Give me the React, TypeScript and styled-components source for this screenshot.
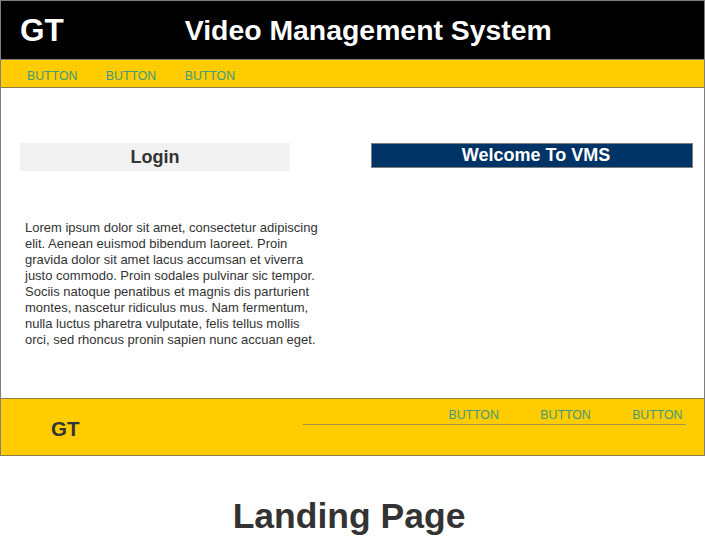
import React from "react";
import styled, { createGlobalStyle } from "styled-components";

const GlobalStyle = createGlobalStyle`
  html, body {
    margin: 0;
    padding: 0;
    background: #ffffff;
    font-family: "Liberation Sans", Arial, Helvetica, sans-serif;
  }
`;

const Page = styled.div`
  width: 705px;
`;

const Frame = styled.div`
  box-sizing: border-box;
  width: 705px;
  border: 1px solid #7f7f7f;
  border-bottom-color: #8a7f4a;
`;

const Header = styled.header`
  height: 58px;
  background: #000000;
  display: flex;
  align-items: center;
  padding-left: 19px;
`;

const Logo = styled.div`
  color: #ffffff;
  font-weight: bold;
  font-size: 31.5px;
`;

const Title = styled.h1`
  margin: 0 0 0 121px;
  color: #ffffff;
  font-weight: bold;
  font-size: 28.4px;
`;

const NavBar = styled.nav`
  box-sizing: border-box;
  height: 29px;
  background: #ffcc00;
  border-top: 1px solid #7f7f7f;
  border-bottom: 1px solid #8a7f4a;
  display: flex;
  align-items: flex-start;
  gap: 28.5px;
  padding: 9px 0 0 26px;
`;

const NavButton = styled.span`
  font-size: 12.3px;
  line-height: 14px;
  color: #3f9a7f;
`;

const Content = styled.main`
  height: 310px;
  display: flex;
  justify-content: space-between;
  align-items: flex-start;
  padding-top: 55px;
  box-sizing: border-box;
`;

const LeftColumn = styled.section`
  margin-left: 19px;
  display: flex;
  flex-direction: column;
`;

const LoginBox = styled.div`
  width: 270px;
  height: 28px;
  background: #f2f2f2;
  color: #333333;
  font-weight: bold;
  font-size: 18px;
  display: flex;
  align-items: center;
  justify-content: center;
`;

const Lorem = styled.p`
  margin: 49px 0 0 5px;
  width: 302px;
  font-size: 13px;
  line-height: 16px;
  color: #333333;
`;

const WelcomeBox = styled.div`
  box-sizing: border-box;
  width: 322px;
  height: 25px;
  margin-right: 11px;
  background: #003366;
  border: 1px solid #7f7f7f;
  color: #ffffff;
  font-weight: bold;
  font-size: 18px;
  display: flex;
  align-items: center;
  justify-content: center;
  padding-left: 8px;
`;

const Footer = styled.footer`
  height: 56px;
  background: #ffcc00;
  border-top: 1px solid #8a7f4a;
  display: flex;
  align-items: flex-start;
`;

const FooterLogo = styled.div`
  align-self: center;
  margin: 3px 0 0 50px;
  color: #333333;
  font-weight: bold;
  font-size: 20.5px;
`;

const FooterNav = styled.nav`
  box-sizing: border-box;
  margin: 9px 18px 0 auto;
  width: 383px;
  display: flex;
  justify-content: flex-end;
  gap: 41.5px;
  padding: 0 3.5px 2px 0;
  border-bottom: 1px solid #a89448;
`;

const Caption = styled.h2`
  margin: 40px 0 0 0;
  padding-right: 7px;
  text-align: center;
  color: #333333;
  font-weight: bold;
  font-size: 35.5px;
`;

export default function App() {
  const buttons = ["BUTTON", "BUTTON", "BUTTON"];
  return (
    <Page>
      <GlobalStyle />
      <Frame>
        <Header>
          <Logo>GT</Logo>
          <Title>Video Management System</Title>
        </Header>
        <NavBar>
          {buttons.map((b, i) => (
            <NavButton key={i}>{b}</NavButton>
          ))}
        </NavBar>
        <Content>
          <LeftColumn>
            <LoginBox>Login</LoginBox>
            <Lorem>
              Lorem ipsum dolor sit amet, consectetur adipiscing elit. Aenean
              euismod bibendum laoreet. Proin gravida dolor sit amet lacus
              accumsan et viverra justo commodo. Proin sodales pulvinar sic
              tempor. Sociis natoque penatibus et magnis dis parturient montes,
              nascetur ridiculus mus. Nam fermentum, nulla luctus pharetra
              vulputate, felis tellus mollis orci, sed rhoncus pronin sapien
              nunc accuan eget.
            </Lorem>
          </LeftColumn>
          <WelcomeBox>Welcome To VMS</WelcomeBox>
        </Content>
        <Footer>
          <FooterLogo>GT</FooterLogo>
          <FooterNav>
            {buttons.map((b, i) => (
              <NavButton key={i}>{b}</NavButton>
            ))}
          </FooterNav>
        </Footer>
      </Frame>
      <Caption>Landing Page</Caption>
    </Page>
  );
}
